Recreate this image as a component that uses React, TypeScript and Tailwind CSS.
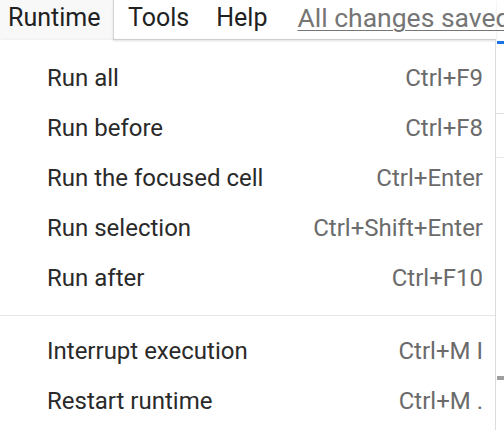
const items = [
  { label: "Run all", keys: "Ctrl+F9" },
  { label: "Run before", keys: "Ctrl+F8" },
  { label: "Run the focused cell", keys: "Ctrl+Enter" },
  { label: "Run selection", keys: "Ctrl+Shift+Enter" },
  { label: "Run after", keys: "Ctrl+F10" },
];

const items2 = [
  { label: "Interrupt execution", keys: "Ctrl+M I" },
  { label: "Restart runtime", keys: "Ctrl+M ." },
];

function MenuRow({ label, keys }: { label: string; keys: string }) {
  return (
    <div className="flex h-[50px] items-center justify-between pl-[47px] pr-[12px] text-[24px] leading-[50px]">
      <span className="text-[#2a2a2a]">{label}</span>
      <span className="text-[#6b6b6b]">{keys}</span>
    </div>
  );
}

export default function App() {
  return (
    <div
      className="h-[430px] w-[504px] overflow-hidden bg-white"
      style={{ fontFamily: "Roboto, 'Noto Sans', sans-serif" }}
    >
      {/* menu bar */}
      <div className="flex h-[40px] whitespace-nowrap text-[25px] leading-[35px] text-[#212121]">
        <div className="h-[40px] w-[113px] bg-[#f8f8f8] pl-[8px]">Runtime</div>
        <div className="flex h-[40px] w-[383px] shrink-0 border-b border-l border-[#d4d4d4] shadow-[0_1px_2px_rgba(0,0,0,0.12)]">
          <span className="ml-[14px]">Tools</span>
          <span className="ml-[27px]">Help</span>
          <span className="ml-[30px] text-[26.5px] text-[#757575] underline decoration-1 underline-offset-[3px]">
            All changes saved
          </span>
        </div>
      </div>

      <div className="flex h-[390px]">
        {/* dropdown */}
        <div className="w-[496px] shrink-0 border-r border-[#dcdcdc] pt-[13px] shadow-[1px_0_3px_rgba(0,0,0,0.08)]">
          {items.map((it) => (
            <MenuRow key={it.label} {...it} />
          ))}
          <div className="mb-[10px] mt-[12px] h-px bg-[#e6e6e6]" />
          {items2.map((it) => (
            <MenuRow key={it.label} {...it} />
          ))}
        </div>

        {/* page behind */}
        <div className="flex flex-1 flex-col bg-white">
          <div className="mt-[1px] ml-[1px] h-[3px] bg-[#1a73e8]" />
          <div className="mt-[69px] h-px bg-[#e0e0e0]" />
          <div className="mt-[43px] h-px bg-[#e8e8e8]" />
          <div className="mt-[218px] ml-[1px] h-[4px] bg-[#9e9e9e]" />
        </div>
      </div>
    </div>
  );
}
